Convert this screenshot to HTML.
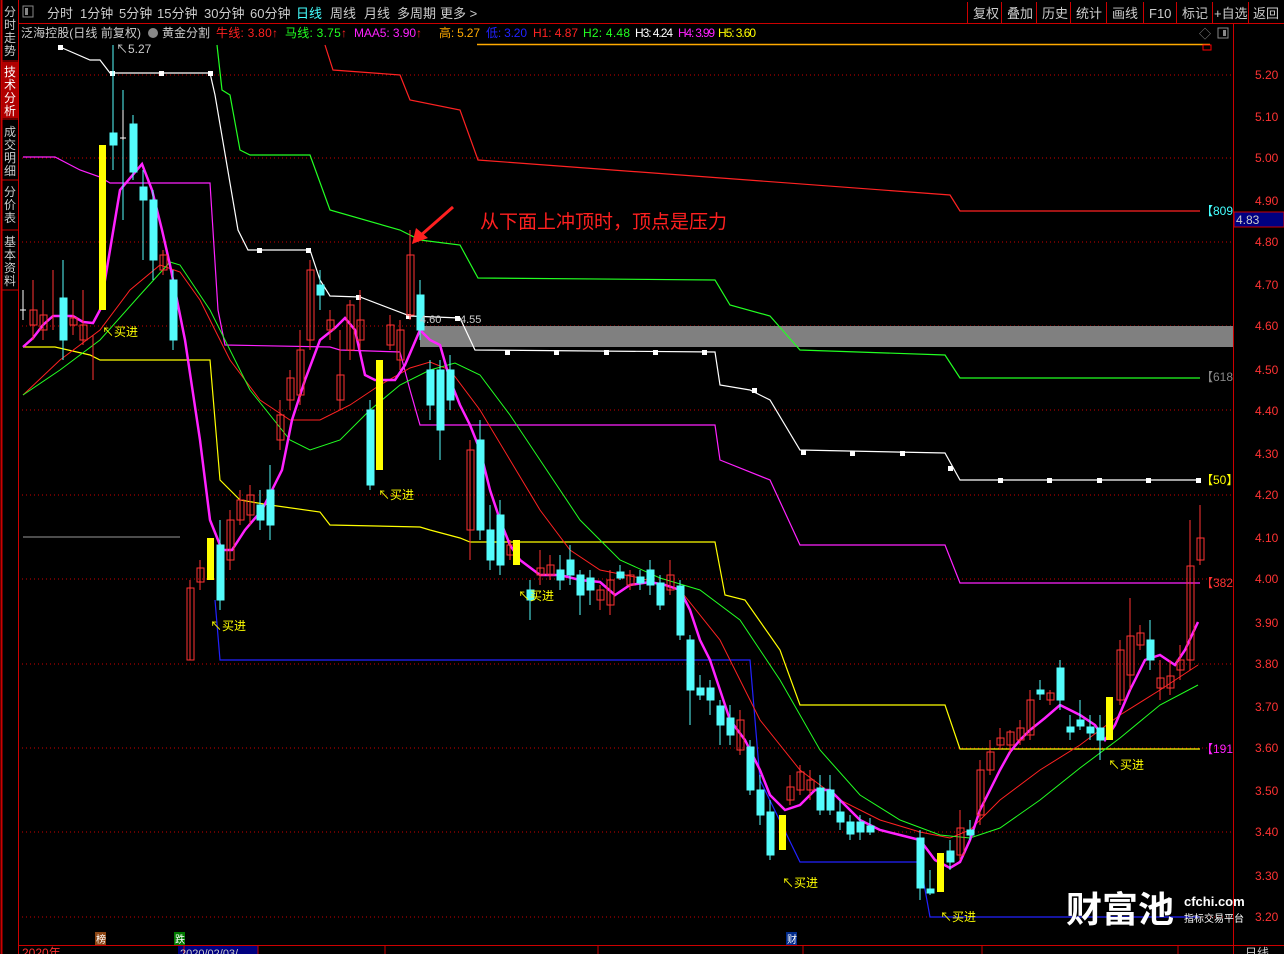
<!DOCTYPE html>
<html><head><meta charset="utf-8"><style>
body{margin:0;background:#000;width:1284px;height:954px;overflow:hidden;font-family:"Liberation Sans","Noto Sans CJK SC",sans-serif;}
svg text{font-family:"Liberation Sans","Noto Sans CJK SC",sans-serif;}
</style></head><body>
<svg width="1284" height="954" xmlns="http://www.w3.org/2000/svg" style="position:absolute;left:0;top:0">
<rect width="1284" height="954" fill="#000"/>
<rect x="0" y="0" width="18" height="954" fill="#000"/>
<line x1="18.5" y1="0" x2="18.5" y2="954" stroke="#c00" stroke-width="1"/>
<line x1="1.5" y1="0" x2="1.5" y2="954" stroke="#c00" stroke-width="2"/>
<rect x="2" y="62" width="16" height="56" fill="#b00000"/>
<g fill="#ccc" font-size="12">
<text x="4" y="16">分</text><text x="4" y="29">时</text><text x="4" y="42">走</text><text x="4" y="55">势</text>
<text x="4" y="76" fill="#fff">技</text><text x="4" y="89" fill="#fff">术</text><text x="4" y="102" fill="#fff">分</text><text x="4" y="115" fill="#fff">析</text>
<text x="4" y="136">成</text><text x="4" y="149">交</text><text x="4" y="162">明</text><text x="4" y="175">细</text>
<text x="4" y="196">分</text><text x="4" y="209">价</text><text x="4" y="222">表</text>
<text x="4" y="246">基</text><text x="4" y="259">本</text><text x="4" y="272">资</text><text x="4" y="285">料</text>
</g>
<g stroke="#c00"><line x1="2" y1="61" x2="18" y2="61"/><line x1="2" y1="119" x2="18" y2="119"/><line x1="2" y1="180" x2="18" y2="180"/><line x1="2" y1="230" x2="18" y2="230"/><line x1="2" y1="290" x2="18" y2="290"/></g>
<line x1="18" y1="23.5" x2="1284" y2="23.5" stroke="#c00"/>
<rect x="23" y="6" width="10" height="11" fill="none" stroke="#888"/><rect x="25" y="8" width="3" height="7" fill="#888"/>
<g fill="#ccc" font-size="13">
<text x="47" y="18">分时</text><text x="80" y="18">1分钟</text><text x="119" y="18">5分钟</text><text x="157" y="18">15分钟</text><text x="204" y="18">30分钟</text><text x="250" y="18">60分钟</text>
<text x="296" y="18" fill="#4ff">日线</text><text x="330" y="18">周线</text><text x="364" y="18">月线</text><text x="397" y="18">多周期</text><text x="440" y="18">更多 &gt;</text>
<text x="973" y="18">复权</text><text x="1007" y="18">叠加</text><text x="1042" y="18">历史</text><text x="1076" y="18">统计</text><text x="1112" y="18">画线</text><text x="1149" y="18">F10</text><text x="1182" y="18">标记</text><text x="1214" y="18">+自选</text><text x="1253" y="18">返回</text>
</g>
<g stroke="#c00"><line x1="967.5" y1="2" x2="967.5" y2="23"/><line x1="1001.5" y1="2" x2="1001.5" y2="23"/><line x1="1036.5" y1="2" x2="1036.5" y2="23"/><line x1="1070.5" y1="2" x2="1070.5" y2="23"/><line x1="1106.5" y1="2" x2="1106.5" y2="23"/><line x1="1143.5" y1="2" x2="1143.5" y2="23"/><line x1="1176.5" y1="2" x2="1176.5" y2="23"/><line x1="1212.5" y1="2" x2="1212.5" y2="23"/><line x1="1248.5" y1="2" x2="1248.5" y2="23"/></g>
<g font-size="12">
<text x="21" y="37" fill="#ccc" textLength="120">泛海控股(日线 前复权)</text>
<circle cx="153" cy="33" r="5" fill="#888"/>
<text x="162" y="37" fill="#ccc">黄金分割</text>
<text x="216" y="37" fill="#ff2020" textLength="62">牛线: 3.80↑</text>
<text x="285" y="37" fill="#2f2" textLength="62">马线: 3.75<tspan fill="#f22">↑</tspan></text>
<text x="354" y="37" fill="#f2f" textLength="68">MAA5: 3.90<tspan fill="#f22">↑</tspan></text>
<text x="439" y="37" fill="#fa0" textLength="41">高: 5.27</text>
<text x="486" y="37" fill="#22f" textLength="41">低: 3.20</text>
<text x="533" y="37" fill="#f22" textLength="45">H1: 4.87</text>
<text x="583" y="37" fill="#2f2" textLength="47">H2: 4.48</text>
<text x="635" y="37" fill="#fff" textLength="38">H3: 4.24</text>
<text x="678" y="37" fill="#f2f" textLength="37">H4: 3.99</text>
<text x="718" y="37" fill="#ff0" textLength="38">H5: 3.60</text>
</g>
<text x="1199" y="38" fill="#888" font-size="12">◇</text>
<rect x="1218" y="28" width="10" height="10" fill="none" stroke="#888"/><rect x="1223" y="30" width="3" height="6" fill="#888"/>
<line x1="477" y1="44.5" x2="1210" y2="44.5" stroke="#fa0" stroke-width="1.5"/>
<rect x="1203" y="45" width="8" height="5" fill="none" stroke="#f00"/>
<g stroke="#c00" stroke-dasharray="1,3">
<line x1="18" y1="75" x2="1233" y2="75"/><line x1="18" y1="158" x2="1233" y2="158"/><line x1="18" y1="242" x2="1233" y2="242"/><line x1="18" y1="326" x2="1233" y2="326"/><line x1="18" y1="410" x2="1233" y2="410"/><line x1="18" y1="495" x2="1233" y2="495"/><line x1="18" y1="579" x2="1233" y2="579"/><line x1="18" y1="664" x2="1233" y2="664"/><line x1="18" y1="748" x2="1233" y2="748"/><line x1="18" y1="832" x2="1233" y2="832"/><line x1="18" y1="917" x2="1233" y2="917"/>
</g>
<line x1="1233.5" y1="24" x2="1233.5" y2="954" stroke="#c00"/>
<line x1="18" y1="945.5" x2="1284" y2="945.5" stroke="#c00"/>
<g fill="#f33" font-size="12">
<text x="1255" y="79">5.20</text><text x="1255" y="121">5.10</text><text x="1255" y="162">5.00</text><text x="1255" y="205">4.90</text><text x="1255" y="246">4.80</text><text x="1255" y="289">4.70</text><text x="1255" y="330">4.60</text><text x="1255" y="374">4.50</text><text x="1255" y="415">4.40</text><text x="1255" y="458">4.30</text><text x="1255" y="499">4.20</text><text x="1255" y="542">4.10</text><text x="1255" y="583">4.00</text><text x="1255" y="627">3.90</text><text x="1255" y="668">3.80</text><text x="1255" y="711">3.70</text><text x="1255" y="752">3.60</text><text x="1255" y="795">3.50</text><text x="1255" y="836">3.40</text><text x="1255" y="880">3.30</text><text x="1255" y="921">3.20</text>
</g>
<rect x="1234" y="212" width="50" height="15" fill="#000080" stroke="#c00"/>
<text x="1236" y="224" fill="#ccc" font-size="12">4.83</text>
<rect x="420" y="326" width="813" height="21" fill="#808080"/>
<polyline fill="none" stroke="#fff" stroke-width="1.2" points="60,47 90,60 100,60 110,73 210,73 215,95 238,230 248,250 310,250 320,280 330,296 360,297 410,316 460,318 475,350 715,352 720,385 750,390 770,400 800,450 945,453 960,480 1200,480"/>
<g fill="#fff"><rect x="58" y="45" width="5" height="5"/><rect x="110" y="71" width="5" height="5"/><rect x="159" y="71" width="5" height="5"/><rect x="208" y="71" width="5" height="5"/><rect x="257" y="248" width="5" height="5"/><rect x="306" y="248" width="5" height="5"/><rect x="356" y="295" width="5" height="5"/><rect x="406" y="314" width="5" height="5"/><rect x="455" y="316" width="5" height="5"/><rect x="505" y="350" width="5" height="5"/><rect x="554" y="350" width="5" height="5"/><rect x="604" y="350" width="5" height="5"/><rect x="653" y="350" width="5" height="5"/><rect x="702" y="350" width="5" height="5"/><rect x="752" y="388" width="5" height="5"/><rect x="801" y="450" width="5" height="5"/><rect x="850" y="451" width="5" height="5"/><rect x="900" y="451" width="5" height="5"/><rect x="948" y="466" width="5" height="5"/><rect x="998" y="478" width="5" height="5"/><rect x="1047" y="478" width="5" height="5"/><rect x="1097" y="478" width="5" height="5"/><rect x="1146" y="478" width="5" height="5"/><rect x="1196" y="478" width="5" height="5"/></g>
<polyline fill="none" stroke="#f2f" stroke-width="1.2" points="23,157 55,157 80,170 100,177 110,183 210,183 218,310 225,345 330,347 340,350 400,352 410,390 420,425 715,425 720,460 770,480 800,545 945,545 960,583 1200,583"/>
<polyline fill="none" stroke="#ff0" stroke-width="1.2" points="23,347 55,347 90,355 100,360 210,360 220,480 240,500 270,505 320,512 330,525 420,527 430,530 460,538 470,542 715,542 725,595 745,600 780,650 800,705 945,705 960,749 1200,749"/>
<polyline fill="none" stroke="#2f2" stroke-width="1.2" points="217,45 222,90 230,95 240,150 250,155 310,155 330,210 400,230 420,240 460,245 478,278 715,280 730,305 770,316 800,350 945,355 960,378 1200,378"/>
<polyline fill="none" stroke="#f22" stroke-width="1.2" points="325,45 333,70 400,75 410,100 460,110 478,160 950,195 960,211 1200,211"/>
<polyline fill="none" stroke="#22f" stroke-width="1.2" points="215,600 220,660 750,660 760,780 800,862 920,862 930,917 1200,917"/>
<line x1="23" y1="537" x2="180" y2="537" stroke="#fff" stroke-width="1" opacity=".6"/>
<polyline fill="none" stroke="#f22" stroke-width="1" points="23,395 60,360 100,330 130,290 160,265 180,272 200,300 230,360 260,400 290,420 320,420 350,405 380,385 410,368 430,362 450,370 480,410 510,460 540,510 570,550 600,570 640,578 680,590 720,640 760,720 800,770 840,800 880,820 920,832 950,838 970,830 1000,800 1040,770 1080,745 1120,715 1160,690 1198,665"/>
<polyline fill="none" stroke="#2f2" stroke-width="1" points="23,395 60,370 100,340 140,295 170,262 180,265 210,310 250,390 290,440 310,450 340,440 370,410 400,385 430,370 455,363 480,375 510,415 540,460 580,520 620,560 660,578 700,590 740,620 780,680 820,750 860,795 900,820 940,835 970,838 1000,828 1040,800 1080,768 1120,738 1160,705 1198,685"/>
<polyline fill="none" stroke="#f2f" stroke-width="2.5" points="23,347 33,338 43,325 53,316 73,316 83,322 93,323 100,310 110,250 120,190 142,164 152,190 162,230 170,265 185,340 200,440 210,520 222,550 232,550 245,530 262,510 272,490 282,470 292,420 305,380 320,340 335,328 345,318 355,330 365,375 375,380 395,380 405,365 420,330 430,340 440,345 450,380 460,405 470,425 480,450 490,490 500,520 510,545 520,560 540,575 560,575 580,580 600,582 615,595 630,585 650,582 665,585 680,590 690,610 700,640 710,660 720,690 730,720 745,740 760,770 770,795 785,810 800,805 815,790 830,790 845,805 860,820 880,830 900,835 920,840 935,860 950,868 960,862 970,840 980,810 990,790 1000,770 1010,752 1020,740 1030,730 1045,718 1060,705 1080,715 1095,725 1105,740 1115,725 1130,690 1145,660 1160,655 1175,665 1185,650 1198,622"/>
<g fill="none" stroke="#ff3232" stroke-width="1">
<path d="M33,280V340M43,300V340M53,270V330M73,300V335M83,290V345M93,335V380M163,250V275M190,580V660M200,560V590M230,510V570M240,490V525M250,485V525M280,400V450M290,370V410M300,330V405M310,260V350M330,310V340M340,330V410M350,300V360M360,290V350M390,315V350M400,320V370M410,230V320M470,440V560M510,540V560M540,550V585M550,555V580M600,585V610M610,570V615M630,570V590M670,560V595M740,710V755M790,775V805M800,765V795M810,770V800M960,810V860M980,760V825M990,740V775M1000,728V750M1010,730V752M1020,720V745M1030,690V740M1050,690V705M1120,640V705M1130,598V690M1140,625V650M1160,660V700M1170,660V695M1180,645V680M1190,520V670M1200,505V565"/>
<rect x="30" y="310" width="7" height="15"/><rect x="40" y="315" width="7" height="15"/><rect x="70" y="318" width="7" height="7"/><rect x="80" y="325" width="7" height="15"/><rect x="160" y="255" width="7" height="15"/><rect x="187" y="588" width="7" height="72"/><rect x="197" y="568" width="7" height="14"/><rect x="227" y="520" width="7" height="40"/><rect x="237" y="500" width="7" height="20"/><rect x="247" y="495" width="7" height="20"/><rect x="277" y="415" width="7" height="25"/><rect x="287" y="378" width="7" height="22"/><rect x="297" y="350" width="7" height="45"/><rect x="307" y="270" width="7" height="70"/><rect x="327" y="320" width="7" height="10"/><rect x="337" y="375" width="7" height="25"/><rect x="347" y="305" width="7" height="45"/><rect x="357" y="320" width="7" height="20"/><rect x="387" y="325" width="7" height="20"/><rect x="397" y="330" width="7" height="30"/><rect x="407" y="255" width="7" height="60"/><rect x="467" y="450" width="7" height="80"/><rect x="507" y="545" width="7" height="10"/><rect x="537" y="568" width="7" height="7"/><rect x="547" y="565" width="7" height="10"/><rect x="597" y="590" width="7" height="10"/><rect x="607" y="580" width="7" height="25"/><rect x="627" y="575" width="7" height="10"/><rect x="667" y="575" width="7" height="15"/><rect x="737" y="720" width="7" height="30"/><rect x="787" y="787" width="7" height="13"/><rect x="797" y="772" width="7" height="18"/><rect x="807" y="780" width="7" height="10"/><rect x="957" y="828" width="7" height="27"/><rect x="977" y="770" width="7" height="45"/><rect x="987" y="752" width="7" height="18"/><rect x="997" y="738" width="7" height="7"/><rect x="1007" y="732" width="7" height="13"/><rect x="1017" y="728" width="7" height="12"/><rect x="1027" y="700" width="7" height="35"/><rect x="1047" y="693" width="7" height="7"/><rect x="1117" y="650" width="7" height="50"/><rect x="1127" y="636" width="7" height="39"/><rect x="1137" y="633" width="7" height="12"/><rect x="1157" y="678" width="7" height="10"/><rect x="1167" y="676" width="7" height="12"/><rect x="1177" y="660" width="7" height="10"/><rect x="1187" y="566" width="7" height="94"/><rect x="1197" y="538" width="7" height="22"/>
</g>
<g fill="#54fcfc" stroke="#54fcfc">
<path d="M63,260V360M113,45V170M123,90V220M133,115V180M143,170V260M153,190V280M173,270V350M220,520V610M260,490V530M270,465V540M320,270V310M370,400V490M420,280V340M430,360V420M440,360V460M450,355V410M480,420V540M490,505V570M500,500V575M530,580V620M560,555V590M570,545V585M580,570V615M590,570V605M620,565V580M640,570V590M650,560V595M660,575V610M680,580V640M690,635V725M700,675V700M710,680V715M720,700V745M730,705V745M750,740V795M760,775V825M770,800V860M820,775V815M830,775V815M840,800V830M850,815V840M860,815V840M870,818V835M920,830V900M930,870V895M950,840V870M970,820V840M1040,680V700M1060,660V710M1070,715V740M1080,700V730M1090,715V740M1100,715V760M1150,620V670"/>
<rect x="60" y="298" width="7" height="42"/><rect x="110" y="133" width="7" height="12"/><rect x="130" y="124" width="7" height="48"/><rect x="140" y="187" width="7" height="13"/><rect x="150" y="200" width="7" height="60"/><rect x="170" y="280" width="7" height="60"/><rect x="217" y="545" width="7" height="55"/><rect x="257" y="505" width="7" height="15"/><rect x="267" y="490" width="7" height="35"/><rect x="317" y="285" width="7" height="10"/><rect x="367" y="410" width="7" height="75"/><rect x="417" y="295" width="7" height="35"/><rect x="427" y="370" width="7" height="35"/><rect x="437" y="370" width="7" height="60"/><rect x="447" y="370" width="7" height="30"/><rect x="477" y="440" width="7" height="90"/><rect x="487" y="530" width="7" height="30"/><rect x="497" y="515" width="7" height="50"/><rect x="527" y="590" width="7" height="10"/><rect x="557" y="570" width="7" height="10"/><rect x="567" y="560" width="7" height="15"/><rect x="577" y="575" width="7" height="20"/><rect x="587" y="578" width="7" height="12"/><rect x="617" y="572" width="7" height="6"/><rect x="637" y="577" width="7" height="6"/><rect x="647" y="570" width="7" height="15"/><rect x="657" y="583" width="7" height="22"/><rect x="677" y="586" width="7" height="49"/><rect x="687" y="640" width="7" height="50"/><rect x="697" y="688" width="7" height="7"/><rect x="707" y="688" width="7" height="12"/><rect x="717" y="706" width="7" height="19"/><rect x="727" y="718" width="7" height="17"/><rect x="747" y="747" width="7" height="43"/><rect x="757" y="790" width="7" height="25"/><rect x="767" y="812" width="7" height="43"/><rect x="817" y="788" width="7" height="22"/><rect x="827" y="790" width="7" height="20"/><rect x="837" y="812" width="7" height="10"/><rect x="847" y="822" width="7" height="12"/><rect x="857" y="822" width="7" height="10"/><rect x="867" y="826" width="7" height="6"/><rect x="917" y="838" width="7" height="50"/><rect x="927" y="889" width="7" height="4"/><rect x="947" y="851" width="7" height="11"/><rect x="967" y="830" width="7" height="5"/><rect x="1037" y="690" width="7" height="4"/><rect x="1057" y="668" width="7" height="32"/><rect x="1067" y="727" width="7" height="5"/><rect x="1077" y="720" width="7" height="6"/><rect x="1087" y="727" width="7" height="6"/><rect x="1097" y="728" width="7" height="12"/><rect x="1147" y="640" width="7" height="20"/>
</g>
<g fill="#fff" stroke="#fff"><path d="M23,290V320M20,310H26M123,140V110M120,138H126"/></g>
<g fill="#ff0">
<rect x="99" y="145" width="7" height="165"/><rect x="207" y="538" width="7" height="42"/><rect x="376" y="360" width="7" height="110"/><rect x="513" y="540" width="7" height="25"/><rect x="779" y="815" width="7" height="35"/><rect x="937" y="853" width="7" height="39"/><rect x="1106" y="697" width="7" height="43"/>
</g>
<g fill="#ff0" font-size="12">
<text x="102" y="336">↖买进</text><text x="378" y="499">↖买进</text><text x="210" y="630">↖买进</text><text x="518" y="600">↖买进</text><text x="782" y="887">↖买进</text><text x="1108" y="769">↖买进</text><text x="940" y="921">↖买进</text>
</g>
<text x="116" y="53" fill="#ccc" font-size="12">↖5.27</text>
<text x="420" y="323" fill="#ccc" font-size="11">4.60</text><text x="460" y="323" fill="#ccc" font-size="11">4.55</text>
<text x="480" y="228" fill="#ff2020" font-size="19">从下面上冲顶时，顶点是压力</text>
<path d="M453,207 L420,236" stroke="#ff2020" stroke-width="3"/><path d="M412,244 L416,228 L428,238 Z" fill="#ff2020"/>
<g font-size="12">
<text x="1201" y="215" fill="#4ff">【809</text><text x="1201" y="381" fill="#888">【618</text><text x="1201" y="484" fill="#ff0">【50】</text><text x="1201" y="587" fill="#f33">【382</text><text x="1201" y="753" fill="#f2f">【191</text>
</g>
<text x="1066" y="922" fill="#fff" font-size="36" font-weight="bold">财富池</text>
<text x="1184" y="906" fill="#fff" font-size="13" font-weight="bold">cfchi.com</text>
<text x="1184" y="922" fill="#fff" font-size="10">指标交易平台</text>
<rect x="95" y="932" width="11" height="13" fill="#8b4513"/><text x="96" y="943" fill="#fff" font-size="10">榜</text>
<rect x="174" y="932" width="11" height="13" fill="#007a00"/><text x="175" y="943" fill="#fff" font-size="10">跌</text>
<rect x="786" y="932" width="11" height="13" fill="#002a8a"/><text x="787" y="943" fill="#fff" font-size="10">财</text>
<rect x="178" y="946" width="80" height="8" fill="#000080"/>
<g stroke="#c00"><path d="M184,946V954M258,946V954M385,946V954M598,946V954M803,946V954M982,946V954M1178,946V954"/></g>
<text x="22" y="957" fill="#f33" font-size="12">2020年</text>
<text x="180" y="957" fill="#ccc" font-size="11">2020/02/03/</text>
<text x="1245" y="957" fill="#ccc" font-size="12">日线</text>
</svg>
</body></html>
